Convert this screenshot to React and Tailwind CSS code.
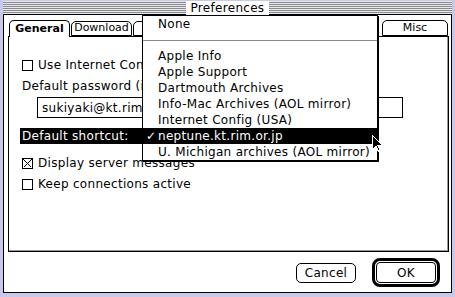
import React from "react";

function Checkbox({ checked }) {
  return (
    <span className="relative inline-block w-[11px] h-[11px] border border-black bg-white shrink-0">
      {checked && (
        <svg className="absolute inset-0" width="9" height="9" viewBox="0 0 9 9">
          <path d="M0.5 0.5 L8.5 8.5 M8.5 0.5 L0.5 8.5" stroke="#000" strokeWidth="1" shapeRendering="crispEdges" />
        </svg>
      )}
    </span>
  );
}

function MenuItem({ children, selected }) {
  return (
    <div
      className={
        "h-[16px] leading-[16px] pl-[15px] relative whitespace-nowrap " +
        (selected ? "bg-black text-white" : "text-black")
      }
    >
      {selected && <span className="absolute left-[3px] top-0">✓</span>}
      {children}
    </div>
  );
}

export default function App() {
  return (
    <div
      className="relative w-[455px] h-[297px] overflow-hidden bg-[#c8c8e8] pt-[1px] px-[3px] text-[12px] tracking-[0.3px] text-black"
      style={{ fontFamily: '"DejaVu Sans", "Liberation Sans", sans-serif' }}
    >
      {/* title bar */}
      <div className="h-[14px] flex justify-center items-center bg-[repeating-linear-gradient(to_bottom,#e8e8f0_0px,#e8e8f0_1px,#8a8a8a_1px,#8a8a8a_2px)] border-b border-black">
        <span className="bg-white px-[5px] h-[14px] leading-[14px]">Preferences</span>
      </div>
      {/* window body */}
      <div className="h-[278px] border-l border-r border-b border-black bg-white flex flex-col">
        {/* tabs */}
        <div className="flex mt-[5px] ml-[5px] relative z-10 h-[16px] items-end tracking-normal">
          <div className="w-[61px] h-[17px] -mb-px border border-b-0 border-black rounded-t-[5px] bg-white flex items-center justify-center font-bold text-[11px]">
            General
          </div>
          <div className="ml-[1px] w-[61px] h-[15px] border border-black rounded-t-[5px] bg-white flex items-center justify-center text-[11px]">
            Download
          </div>
          <div className="ml-[1px] w-[61px] h-[15px] border border-black rounded-t-[5px] bg-white"></div>
          <div className="ml-auto mr-[3px] w-[66px] h-[16px] border border-black rounded-t-[5px] bg-white flex items-center justify-center text-[11px]">
            Misc
          </div>
        </div>
        {/* panel */}
        <div className="ml-[4px] mr-[2px] h-[216px] border border-black shadow-[inset_-1px_-1px_0_#999] flex flex-col">
          <div className="mt-[20px] ml-[13px] h-[16px] flex items-center gap-[5px] whitespace-nowrap">
            <Checkbox />
            <span className="w-[104px] overflow-hidden">Use Internet Config</span>
          </div>
          <div className="mt-[5px] ml-[13px] w-[120px] overflow-hidden h-[16px] leading-[16px] whitespace-nowrap">
            Default password (if none):
          </div>
          <div className="mt-[3px] ml-[28px] w-[366px] h-[21px] border border-black flex items-center pl-[4px] whitespace-nowrap overflow-hidden">
            <span className="w-[100px] overflow-hidden">sukiyaki@kt.rim.or.jp</span>
          </div>
          <div className="mt-[10px] ml-[11px] w-[123px] h-[16px] leading-[16px] bg-black text-white pl-[2px] whitespace-nowrap">
            Default shortcut:
          </div>
          <div className="mt-[11px] ml-[13px] h-[16px] flex items-center gap-[5px] whitespace-nowrap">
            <Checkbox checked />
            <span>Display server messages</span>
          </div>
          <div className="mt-[5px] ml-[13px] h-[16px] flex items-center gap-[5px] whitespace-nowrap">
            <Checkbox />
            <span>Keep connections active</span>
          </div>
        </div>
        {/* buttons */}
        <div className="flex justify-end items-center mt-[6px] mr-[11px] gap-[16px]">
          <div className="w-[60px] h-[20px] border border-black rounded-[5px] flex items-center justify-center">
            Cancel
          </div>
          <div className="w-[68px] h-[29px] border-[3px] border-black rounded-[8px] p-[1px]">
            <div className="w-full h-full border border-black rounded-[4px] flex items-center justify-center">
              OK
            </div>
          </div>
        </div>
      </div>

      {/* popup menu */}
      <div className="absolute z-20 left-[142px] top-[15px] w-[236px] h-[146px] border border-black bg-white shadow-[1px_1px_0_#000]">
        <MenuItem>None</MenuItem>
        <div className="h-[16px] flex items-center">
          <div className="w-full h-px bg-[#888]"></div>
        </div>
        <MenuItem>Apple Info</MenuItem>
        <MenuItem>Apple Support</MenuItem>
        <MenuItem>Dartmouth Archives</MenuItem>
        <MenuItem>Info-Mac Archives (AOL mirror)</MenuItem>
        <MenuItem>Internet Config (USA)</MenuItem>
        <MenuItem selected>neptune.kt.rim.or.jp</MenuItem>
        <MenuItem>U. Michigan archives (AOL mirror)</MenuItem>
      </div>

      {/* cursor */}
      <svg className="absolute z-30 left-[372px] top-[135px]" width="12" height="18" viewBox="0 0 12 18" shapeRendering="crispEdges">
        <path d="M0.5 0.5 L0.5 14.5 L4 11 L6.5 16.5 L8.5 15.5 L6 10.5 L10.5 10.5 Z" fill="#000" stroke="#fff" strokeWidth="1" />
      </svg>
    </div>
  );
}
